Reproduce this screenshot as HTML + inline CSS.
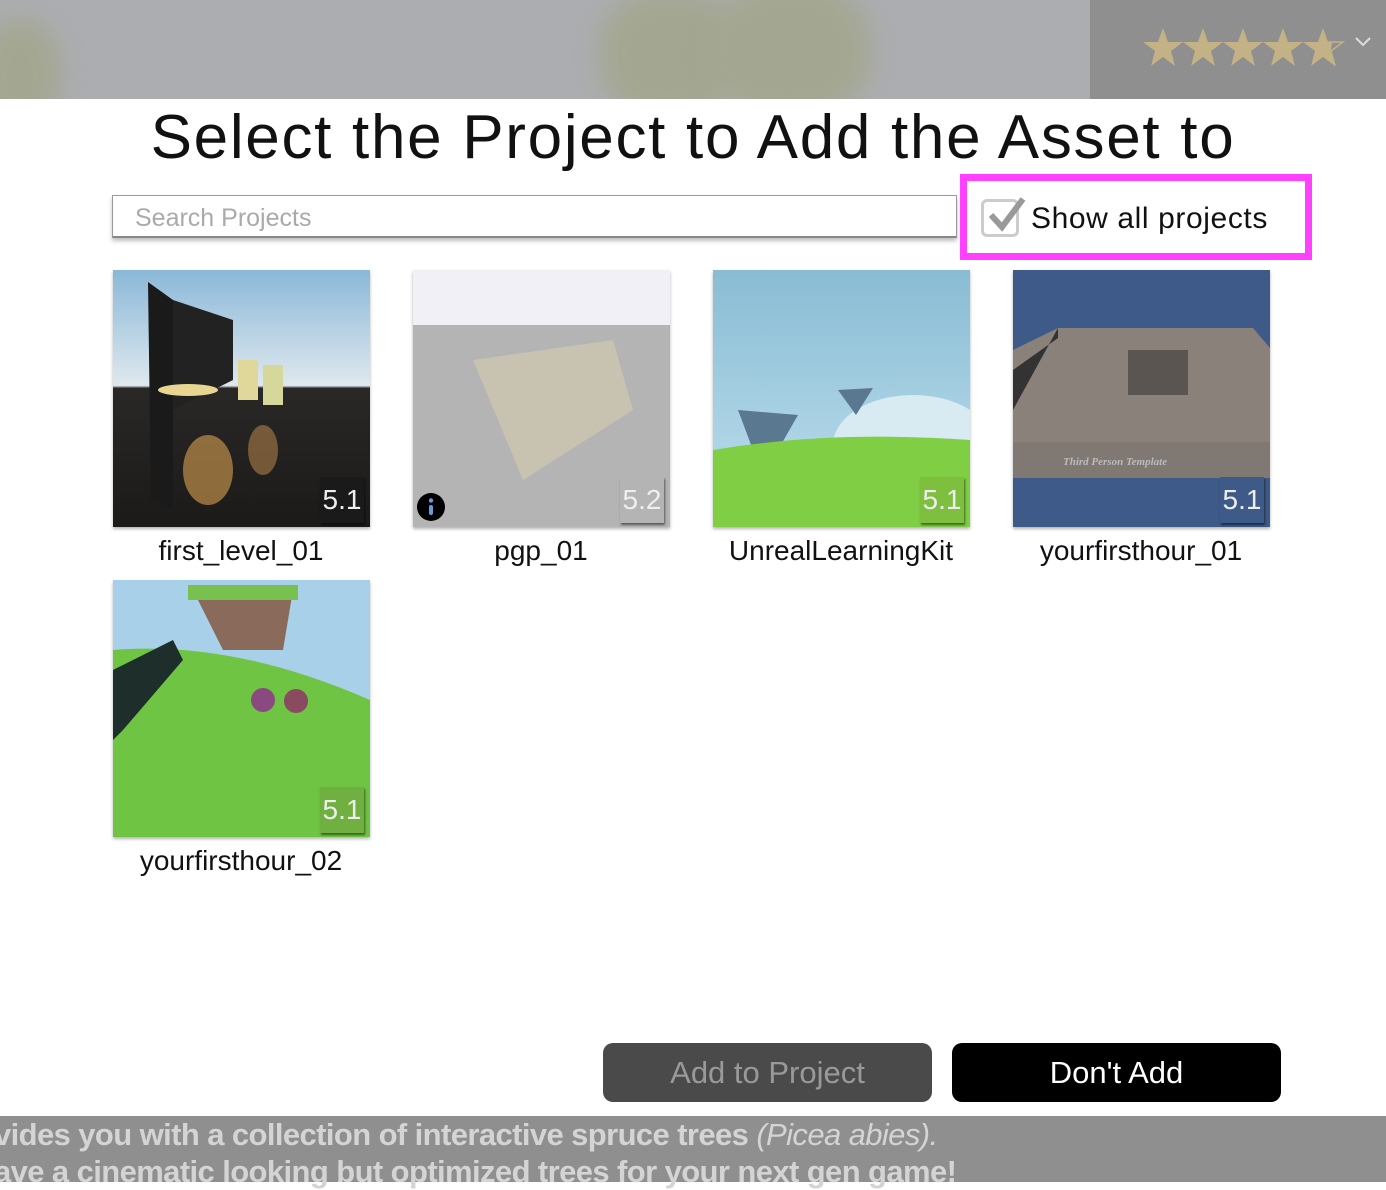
<!DOCTYPE html>
<html><head><meta charset="utf-8"><style>
*{margin:0;padding:0;box-sizing:border-box}
body{width:1386px;height:1182px;overflow:hidden;background:#fff;font-family:"Liberation Sans",sans-serif;position:relative}
.hdr{position:absolute;left:0;top:0;width:1386px;height:99px;background:#acadb0;overflow:hidden}
.tree{position:absolute;border-radius:45%;background:#a3a791;filter:blur(12px)}
.rp{position:absolute;left:1090px;top:0;width:296px;height:99px;background:#8f8f8f}
.title{position:absolute;left:0;width:1386px;top:102px;text-align:center;font-size:62px;letter-spacing:1.7px;color:#111}
.search{position:absolute;left:112px;top:195px;width:845px;height:43px;border:1px solid #999;border-bottom:2px solid #888;box-shadow:0 3px 4px rgba(0,0,0,.25);font-size:25px;color:#aaa;padding:8px 0 0 22px}
.chk{position:absolute;left:960px;top:174px;width:352px;height:86px;border:7px solid #ff40ff}
.chk .bx{position:absolute;left:14px;top:18px;width:38px;height:38px;border:3px solid #ccc;border-radius:6px}
.chk span{position:absolute;left:64px;top:21px;font-size:30px;letter-spacing:0.6px;color:#111}
.th{position:absolute;width:257px;height:257px;overflow:hidden;box-shadow:0 2px 3px rgba(0,0,0,.3)}
.th svg{display:block}
.ver{position:absolute;right:6px;bottom:4px;width:44px;height:46px;font-size:28px;color:#eee;text-align:center;line-height:46px;box-shadow:1px 2px 2px rgba(0,0,0,.5)}
.lbl{position:absolute;width:300px;text-align:center;font-size:28px;color:#111}
.btn{position:absolute;top:1043px;width:329px;height:59px;border-radius:10px;font-size:31px;text-align:center;line-height:59px}
.foot{position:absolute;left:0;top:1116px;width:1386px;height:66px;background:#8f8f8f;color:#d4d4d4;font-size:31px;line-height:37px;font-weight:bold;letter-spacing:-0.6px;white-space:nowrap}
</style></head><body>
<div class="hdr">
<div class="tree" style="left:-20px;top:20px;width:80px;height:110px"></div>
<div class="tree" style="left:600px;top:-10px;width:140px;height:130px"></div>
<div class="tree" style="left:710px;top:-20px;width:160px;height:140px"></div>
<div class="rp"></div>
<svg style="position:absolute;left:1142px;top:26px" width="240" height="44" viewBox="0 0 240 44">
<g fill="#c2b286">
<polygon id="s" points="21,2 26,16 41,16 29,25 33,40 21,31 9,40 13,25 1,16 16,16"/>
<use href="#s" x="40"/><use href="#s" x="80"/><use href="#s" x="120"/>
<polygon points="181,2 186,16 190,16 189,25 193,40 181,31 169,40 173,25 161,16 176,16"/>
</g>
<polyline points="185,16 201,16 189,25 193,40" fill="none" stroke="#c2b286" stroke-width="1.5"/>
<polyline points="214,12 221,19 228,12" fill="none" stroke="#ddd" stroke-width="2"/>
</svg>
</div>
<div class="title">Select the Project to Add the Asset to</div>
<div class="search">Search Projects</div>
<div class="chk"><div class="bx"></div>
<svg style="position:absolute;left:18px;top:12px" width="44" height="44"><polyline points="6,22 17,34 38,6" fill="none" stroke="#999" stroke-width="6"/></svg>
<span>Show all projects</span></div>

<div class="th" style="left:113px;top:270px">
<svg width="257" height="257"><defs><linearGradient id="g1" x1="0" y1="0" x2="0" y2="1"><stop offset="0" stop-color="#8ab8d8"/><stop offset=".45" stop-color="#dfe8ee"/><stop offset=".46" stop-color="#2a2826"/><stop offset="1" stop-color="#1b1a19"/></linearGradient></defs>
<rect width="257" height="257" fill="url(#g1)"/><polygon points="35,12 60,30 60,240 38,230" fill="#1a1a1a"/><polygon points="60,30 120,50 120,110 60,140" fill="#222"/>
<ellipse cx="75" cy="120" rx="30" ry="6" fill="#e8d590"/><rect x="125" y="90" width="20" height="40" fill="#e0d79a"/><rect x="150" y="95" width="20" height="40" fill="#d6d79a"/>
<ellipse cx="95" cy="200" rx="25" ry="35" fill="#d9a050" opacity=".6"/><ellipse cx="150" cy="180" rx="15" ry="25" fill="#c79050" opacity=".5"/></svg>
<div class="ver" style="background:#1a1a1a">5.1</div></div>
<div class="lbl" style="left:91px;top:535px">first_level_01</div>

<div class="th" style="left:413px;top:270px">
<svg width="257" height="257"><rect width="257" height="257" fill="#b4b4b4"/><rect width="257" height="55" fill="#f0f0f6"/>
<polygon points="60,90 200,70 220,140 110,210" fill="#c8c2b0"/></svg>
<svg style="position:absolute;left:3px;top:222px" width="30" height="30"><circle cx="15" cy="15" r="14" fill="#000"/><rect x="13" y="13" width="4" height="10" rx="2" fill="#6a9ad8"/><circle cx="15" cy="8.5" r="2.2" fill="#6a9ad8"/></svg>
<div class="ver" style="background:#b4b4b4">5.2</div></div>
<div class="lbl" style="left:391px;top:535px">pgp_01</div>

<div class="th" style="left:713px;top:270px">
<svg width="257" height="257"><defs><linearGradient id="g3" x1="0" y1="0" x2="0" y2="1"><stop offset="0" stop-color="#89bcd4"/><stop offset="1" stop-color="#bfe0ee"/></linearGradient></defs>
<rect width="257" height="257" fill="url(#g3)"/><ellipse cx="200" cy="175" rx="80" ry="50" fill="#d8eaf2"/><polygon points="25,140 85,145 65,180 40,180" fill="#5a7890"/><polygon points="125,120 160,118 143,145" fill="#5a7890"/>
<path d="M0,180 Q120,160 257,170 L257,257 L0,257Z" fill="#7fce44"/></svg>
<div class="ver" style="background:#7fbf40">5.1</div></div>
<div class="lbl" style="left:691px;top:535px">UnrealLearningKit</div>

<div class="th" style="left:1013px;top:270px">
<svg width="257" height="257"><rect width="257" height="257" fill="#3e5a88"/><polygon points="0,80 45,58 240,58 257,78 257,208 0,208" fill="#8a817a"/><polygon points="0,140 45,58 45,68 0,100" fill="#333"/>
<rect x="0" y="172" width="257" height="36" fill="#7f7873"/><rect x="115" y="80" width="60" height="45" fill="#5a5550"/><text x="50" y="195" font-size="11" fill="#bbb" font-style="italic" font-weight="bold" font-family="Liberation Serif">Third Person Template</text></svg>
<div class="ver" style="background:#3e5a88">5.1</div></div>
<div class="lbl" style="left:991px;top:535px">yourfirsthour_01</div>

<div class="th" style="left:113px;top:580px">
<svg width="257" height="257"><rect width="257" height="257" fill="#a8d0e8"/><path d="M0,70 Q120,60 257,120 L257,257 L0,257Z" fill="#6fc444"/>
<polygon points="80,10 180,10 170,70 110,70" fill="#8a6a5a"/><rect x="75" y="5" width="110" height="15" fill="#78c050"/><polygon points="0,90 60,60 70,80 10,150 0,160" fill="#1e2e2a"/>
<circle cx="150" cy="120" r="12" fill="#8a4a80"/><circle cx="183" cy="121" r="12" fill="#8a4a60"/></svg>
<div class="ver" style="background:#6fb040">5.1</div></div>
<div class="lbl" style="left:91px;top:845px">yourfirsthour_02</div>

<div class="btn" style="left:603px;background:#4a4a4a;color:#999">Add to Project</div>
<div class="btn" style="left:952px;background:#000;color:#fff">Don't Add</div>
<div class="foot"><div style="margin-left:-6px">vides you with a collection of interactive spruce trees <i style="font-weight:normal">(Picea abies).</i></div><div style="margin-left:-6px">ave a cinematic looking but optimized trees for your next gen game!</div></div>
</body></html>
